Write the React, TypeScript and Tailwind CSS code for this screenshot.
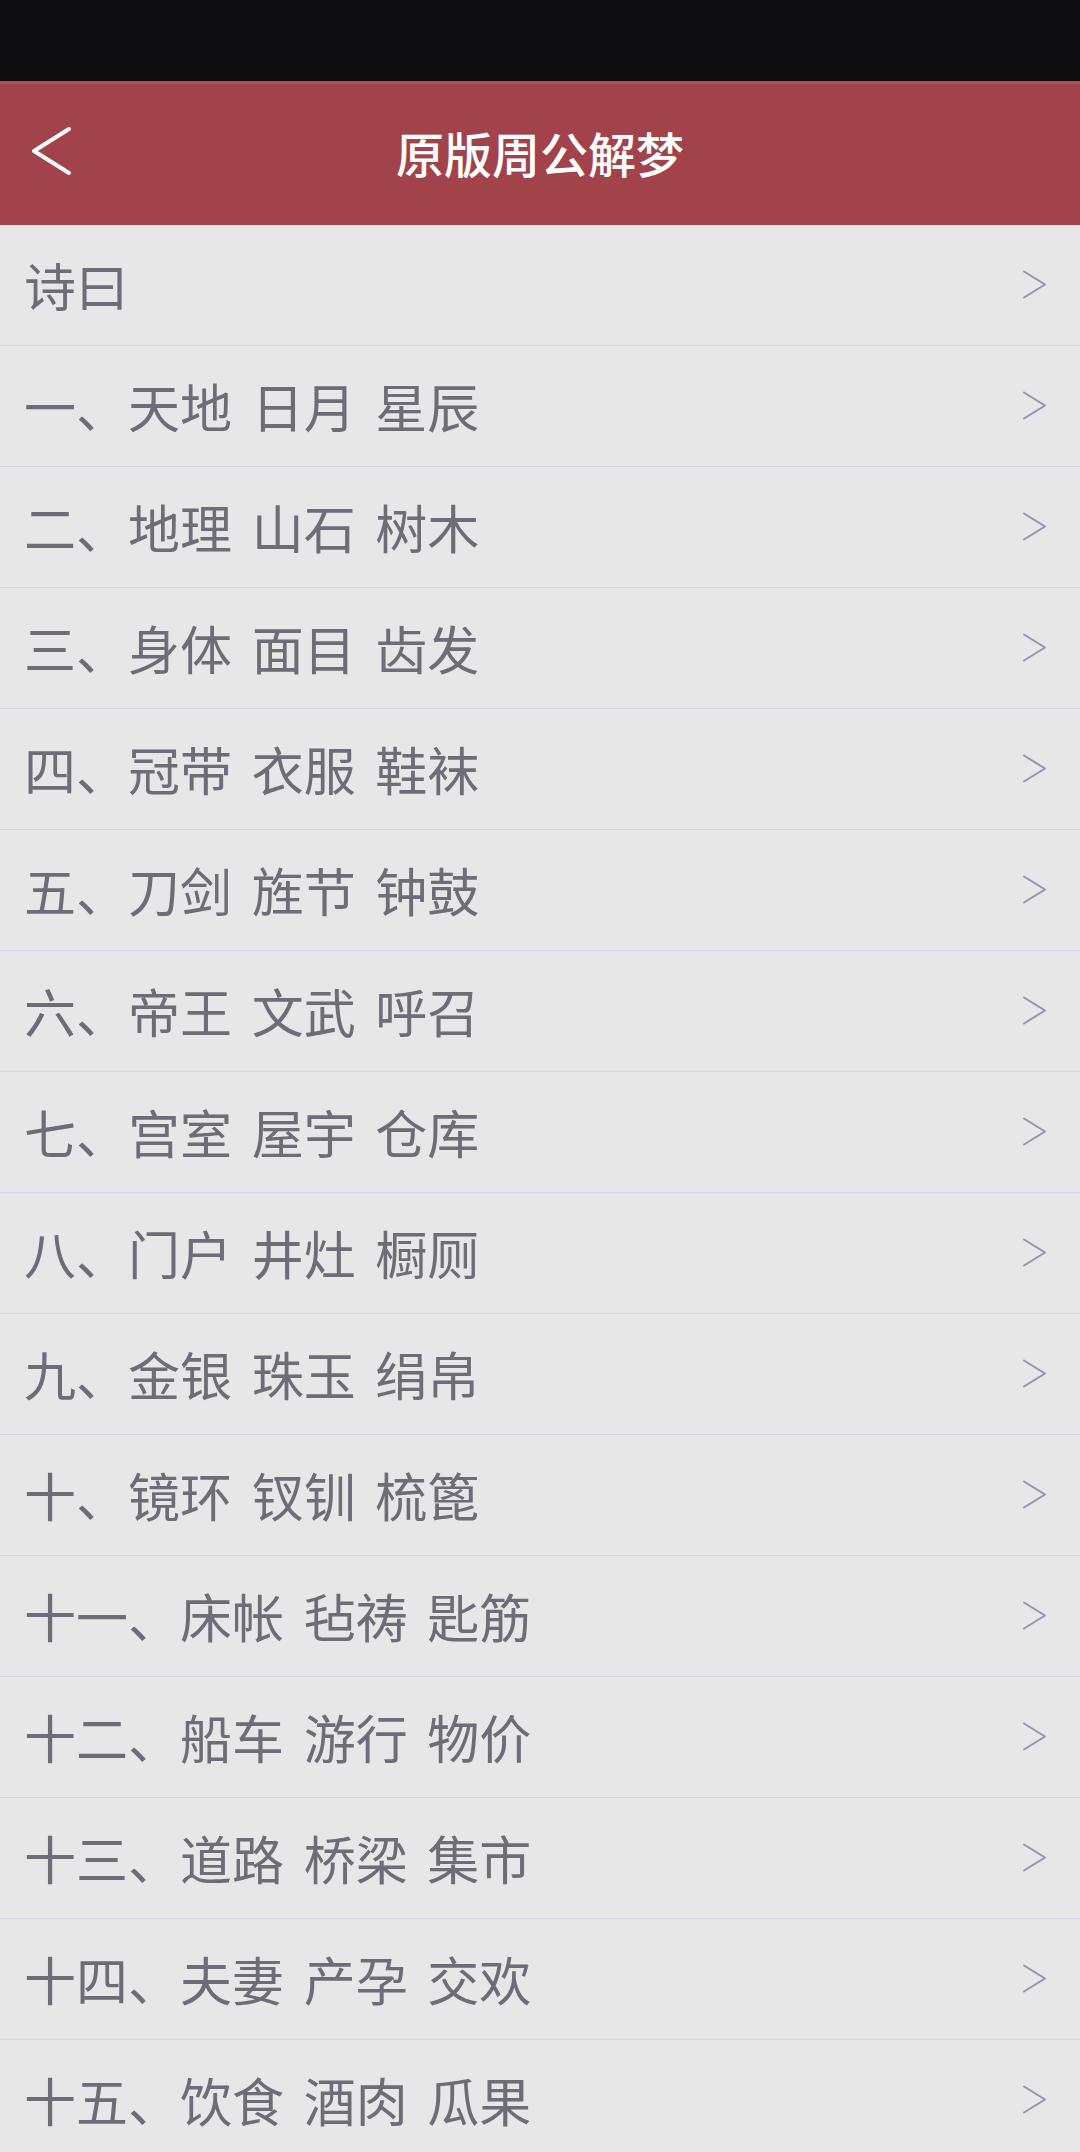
const chapters = [
  "诗曰",
  "一、天地 日月 星辰",
  "二、地理 山石 树木",
  "三、身体 面目 齿发",
  "四、冠带 衣服 鞋袜",
  "五、刀剑 旌节 钟鼓",
  "六、帝王 文武 呼召",
  "七、宫室 屋宇 仓库",
  "八、门户 井灶 橱厕",
  "九、金银 珠玉 绢帛",
  "十、镜环 钗钏 梳篦",
  "十一、床帐 毡祷 匙筋",
  "十二、船车 游行 物价",
  "十三、道路 桥梁 集市",
  "十四、夫妻 产孕 交欢",
  "十五、饮食 酒肉 瓜果",
]

function BackArrow() {
  return (
    <svg width="42" height="50" viewBox="0 0 42 50" fill="none">
      <path d="M38 3 L3 25 L38 47" stroke="#ffffff" strokeWidth="4" strokeLinecap="round" strokeLinejoin="round" />
    </svg>
  )
}

function RowArrow() {
  return (
    <svg width="26" height="30" viewBox="0 0 26 30" fill="none" className="shrink-0">
      <path d="M2 1.5 L23 14.5 L2 27.5" stroke="#9a90ad" strokeWidth="2" strokeLinecap="round" strokeLinejoin="round" />
    </svg>
  )
}

export default function App() {
  return (
    <div
      className="w-[1080px] h-[2152px] overflow-hidden bg-[#e7e7e7]"
      style={{ fontFamily: '"Noto Sans CJK SC", "Noto Sans", sans-serif' }}
    >
      {/* status bar */}
      <div className="h-[81px] bg-[#0d0c0e]" />

      {/* header */}
      <div className="relative h-[144px] bg-[#a2434b] border-t-[3px] border-[#a94f58] flex items-center justify-center pb-[6px]">
        <button className="absolute left-[31px] top-[42px] flex">
          <BackArrow />
        </button>
        <h1 className="text-white text-[48px] font-medium leading-none">原版周公解梦</h1>
      </div>

      {/* list */}
      <ul>
        {chapters.map((title) => (
          <li
            key={title}
            className="h-[121px] flex items-center justify-between pl-[24px] pr-[32px] border-b border-[#d5d3e2]"
          >
            <span className="text-[52px] leading-none text-[#6d6c77] [word-spacing:8px] whitespace-pre">{title}</span>
            <RowArrow />
          </li>
        ))}
      </ul>
    </div>
  )
}
